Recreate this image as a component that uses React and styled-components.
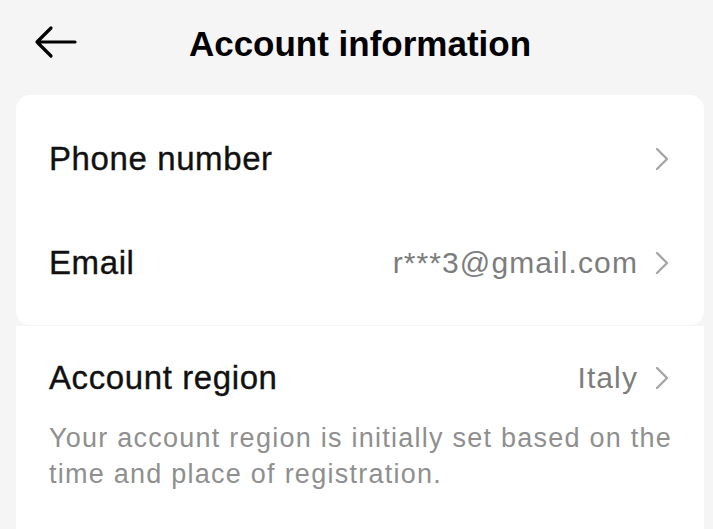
import React from "react";
import styled, { createGlobalStyle } from "styled-components";

const GlobalStyle = createGlobalStyle`
    html, body {
        margin: 0;
        padding: 0;
        background: #f5f5f5;
    }
    body {
        font-family: "Liberation Sans", Arial, sans-serif;
        color: #161823;
    }
`;

function BackArrow() {
    return (
        <svg width="44" height="36" viewBox="0 0 44 36" fill="none">
            <path
                d="M3 17 H41 M17 3 L3 17 L17 31"
                stroke="#000"
                strokeWidth="3.2"
                strokeLinecap="round"
                strokeLinejoin="round"
            />
        </svg>
    );
}

function Chevron() {
    return (
        <svg width="16" height="24" viewBox="0 0 16 24" fill="none">
            <path
                d="M3 2 L13 12 L3 22"
                stroke="#a6a6a6"
                strokeWidth="2.4"
                strokeLinecap="round"
                strokeLinejoin="round"
            />
        </svg>
    );
}

function Row({ label, value, children }) {
    return (
        <RowContainer>
            <RowMain>
                <Label>{label}</Label>
                <Trail>
                    {value && <Value>{value}</Value>}
                    <Chevron />
                </Trail>
            </RowMain>
            {children}
        </RowContainer>
    );
}

export default function App() {
    return (
        <Page>
            <GlobalStyle />
            <Header>
                <BackButton>
                    <BackArrow />
                </BackButton>
                <Title>Account information</Title>
            </Header>
            <Card>
                <Row label="Phone number" />
                <Row label="Email" value="r***3@gmail.com" />
            </Card>
            <Card $flatTop>
                <Row label="Account region" value="Italy">
                    <Note>
                        Your account region is initially set based on the time and
                        place of registration.
                    </Note>
                </Row>
            </Card>
        </Page>
    );
}

const Page = styled.div`
    min-height: 529px;
    display: flex;
    flex-direction: column;
    padding: 0 9px 0 16px;
    box-sizing: border-box;
    overflow: hidden;
`;

const Header = styled.header`
    height: 95px;
    display: flex;
    align-items: center;
    justify-content: center;
    position: relative;
    padding-bottom: 8px;
    box-sizing: border-box;
`;

const BackButton = styled.button`
    position: absolute;
    left: 18px;
    top: 25px;
    border: 0;
    padding: 0;
    background: none;
    display: flex;
`;

const Title = styled.h1`
    margin: 0;
    font-size: 35px;
    font-weight: 700;
    color: #000;
`;

const Card = styled.section`
    background: #fff;
    border-radius: ${(p) => (p.$flatTop ? "0" : "14px")};
    padding: ${(p) => (p.$flatTop ? "0 34px 60px 33px" : "12px 34px 10px 33px")};
    margin-bottom: ${(p) => (p.$flatTop ? "0" : "1px")};
    flex: ${(p) => (p.$flatTop ? "1" : "none")};
`;

const RowContainer = styled.div`
    display: flex;
    flex-direction: column;
`;

const RowMain = styled.div`
    height: 104px;
    display: flex;
    align-items: center;
    justify-content: space-between;
`;

const Label = styled.span`
    font-size: 33px;
    letter-spacing: 0.6px;
    color: #111;
    -webkit-text-stroke: 0.35px #111;
`;

const Trail = styled.span`
    display: flex;
    align-items: center;
    gap: 16px;
`;

const Value = styled.span`
    font-size: 30px;
    letter-spacing: 1.1px;
    color: #7d7d7d;
`;

const Note = styled.p`
    margin: -10px -10px 0 0;
    font-size: 27px;
    line-height: 36px;
    letter-spacing: 1.25px;
    color: #8f8f8f;
`;
